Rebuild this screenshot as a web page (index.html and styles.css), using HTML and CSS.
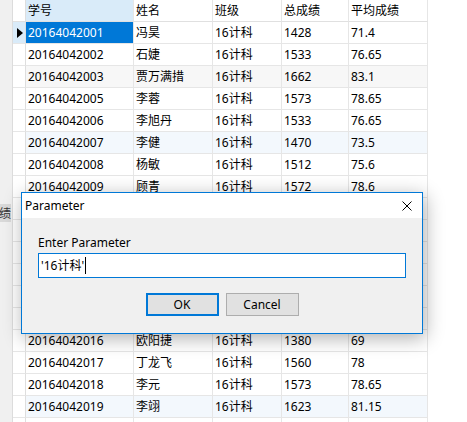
FILE: index.html
```html
<!DOCTYPE html>
<html lang="zh">
<head>
<meta charset="utf-8">
<link rel="stylesheet" href="styles.css">
</head>
<body>
<div class="app">
  <div class="strip">
    <div class="tabfrag"><span>成绩</span></div>
  </div>
  <div class="grid">
    <div class="row head">
      <div class="rh"></div><div class="sel-col">学号</div><div>姓名</div><div>班级</div><div>总成绩</div><div>平均成绩</div>
    </div>
    <div class="row cur">
      <div class="rh"><span class="arrow"></span></div><div class="sel-cell">20164042001</div><div>冯昊</div><div>16计科</div><div>1428</div><div>71.4</div>
    </div>
    <div class="row">
      <div class="rh"></div><div>20164042002</div><div>石婕</div><div>16计科</div><div>1533</div><div>76.65</div>
    </div>
    <div class="row gray">
      <div class="rh"></div><div>20164042003</div><div>贾万满措</div><div>16计科</div><div>1662</div><div>83.1</div>
    </div>
    <div class="row">
      <div class="rh"></div><div>20164042005</div><div>李蓉</div><div>16计科</div><div>1573</div><div>78.65</div>
    </div>
    <div class="row">
      <div class="rh"></div><div>20164042006</div><div>李旭丹</div><div>16计科</div><div>1533</div><div>76.65</div>
    </div>
    <div class="row blue">
      <div class="rh"></div><div>20164042007</div><div>李健</div><div>16计科</div><div>1470</div><div>73.5</div>
    </div>
    <div class="row">
      <div class="rh"></div><div>20164042008</div><div>杨敏</div><div>16计科</div><div>1512</div><div>75.6</div>
    </div>
    <div class="row">
      <div class="rh"></div><div>20164042009</div><div>顾青</div><div>16计科</div><div>1572</div><div>78.6</div>
    </div>
    <div class="row"><div class="rh"></div><div></div><div></div><div></div><div></div><div></div></div>
    <div class="row"><div class="rh"></div><div></div><div></div><div></div><div></div><div></div></div>
    <div class="row"><div class="rh"></div><div></div><div></div><div></div><div></div><div></div></div>
    <div class="row"><div class="rh"></div><div></div><div></div><div></div><div></div><div></div></div>
    <div class="row"><div class="rh"></div><div></div><div></div><div></div><div></div><div></div></div>
    <div class="row"><div class="rh"></div><div></div><div></div><div></div><div></div><div></div></div>
    <div class="row">
      <div class="rh"></div><div>20164042016</div><div>欧阳捷</div><div>16计科</div><div>1380</div><div>69</div>
    </div>
    <div class="row">
      <div class="rh"></div><div>20164042017</div><div>丁龙飞</div><div>16计科</div><div>1560</div><div>78</div>
    </div>
    <div class="row">
      <div class="rh"></div><div>20164042018</div><div>李元</div><div>16计科</div><div>1573</div><div>78.65</div>
    </div>
    <div class="row blue">
      <div class="rh"></div><div>20164042019</div><div>李翊</div><div>16计科</div><div>1623</div><div>81.15</div>
    </div>
    <div class="row"><div class="rh"></div><div></div><div></div><div></div><div></div><div></div></div>
  </div>
  <div class="dialog">
    <div class="titlebar">
      <span class="title">Parameter</span>
      <svg class="close" width="10" height="10" viewBox="0 0 10 10"><path d="M0.5 0.5 L9.5 9.5 M9.5 0.5 L0.5 9.5" stroke="#000" stroke-width="1" fill="none"/></svg>
    </div>
    <div class="body">
      <div class="label">Enter Parameter</div>
      <div class="input">'16计科'<span class="caret"></span></div>
      <div class="buttons">
        <div class="btn default">OK</div>
        <div class="btn">Cancel</div>
      </div>
    </div>
  </div>
</div>
</body>
</html>
```

FILE: styles.css
```css
html, body {
  margin: 0;
  padding: 0;
  background: #ffffff;
  overflow: hidden;
}
body {
  font-family: "Noto Sans", "Noto Sans CJK SC", sans-serif;
  font-size: 12px;
  color: #000;
}
.app {
  position: relative;
  display: flex;
  width: 467px;
  height: 422px;
  overflow: hidden;
}
.strip {
  width: 13px;
  box-sizing: border-box;
  background: #f0f0f0;
  border-right: 1px solid #dcdcdc;
  display: flex;
  flex-direction: column;
}
.tabfrag {
  margin-top: 204px;
  width: 11px;
  height: 18px;
  background: #d9d9d9;
  overflow: hidden;
  display: flex;
  justify-content: flex-end;
  line-height: 18px;
  color: #333;
  font-family: "Noto Sans CJK SC", sans-serif;
}
.tabfrag span {
  white-space: nowrap;
  flex: none;
}
.grid {
  display: grid;
  grid-template-columns: 13px 108px 79px 69px 67px 79px;
  grid-auto-rows: 22px;
  align-content: start;
}
.row {
  display: contents;
}
.row > div {
  box-sizing: border-box;
  border-right: 1px solid #e6e6e6;
  border-bottom: 1px solid #e6e6e6;
  padding-left: 2px;
  line-height: 21px;
  white-space: nowrap;
  overflow: hidden;
  background: #ffffff;
}
.row > .rh {
  padding: 0;
  border-right-color: #dedede;
}
.row.head > div {
  background: #ffffff;
  border-bottom-color: #e0e0e0;
}
.row.head > .sel-col {
  background: #d9ebf9;
}
.row.cur > .rh {
  background: #d9ebf9;
  display: flex;
  align-items: center;
  justify-content: center;
}
.arrow {
  width: 0;
  height: 0;
  border-top: 5px solid transparent;
  border-bottom: 5px solid transparent;
  border-left: 6px solid #000;
  margin-left: 2px;
}
.row > .sel-cell {
  background: #0078d7;
  color: #ffffff;
}
.row.gray > div:not(.rh) {
  background: #f7f7f7;
}
.row.blue > div:not(.rh) {
  background: #f3f8fd;
}
.dialog {
  position: absolute;
  left: 21px;
  top: 192px;
  width: 402px;
  height: 142px;
  box-sizing: border-box;
  border: 1px solid #0078d7;
  background: #f0f0f0;
  box-shadow: 2px 4px 18px rgba(0, 0, 0, 0.32);
  display: flex;
  flex-direction: column;
}
.titlebar {
  height: 25px;
  background: #ffffff;
  display: flex;
  align-items: center;
  justify-content: space-between;
  padding: 0 10px 0 3px;
  flex: none;
}
.title {
  line-height: 16px;
  margin-top: 1px;
}
.close {
  display: block;
  margin-top: 1px;
}
.body {
  flex: 1;
  background: #f0f0f0;
  padding: 17px 16px 0 16px;
  display: flex;
  flex-direction: column;
}
.label {
  line-height: 16px;
  height: 16px;
}
.input {
  margin-top: 2px;
  height: 25px;
  box-sizing: border-box;
  border: 1px solid #0078d7;
  background: #ffffff;
  padding-left: 2px;
  line-height: 23px;
  display: flex;
  align-items: center;
}
.caret {
  display: inline-block;
  width: 1px;
  height: 17px;
  background: #000;
  margin-left: 1px;
}
.buttons {
  margin-top: 15px;
  display: flex;
  justify-content: center;
  gap: 7px;
}
.btn {
  width: 73px;
  height: 23px;
  box-sizing: border-box;
  border: 1px solid #adadad;
  background: #e1e1e1;
  display: flex;
  align-items: center;
  justify-content: center;
  line-height: 16px;
}
.btn.default {
  border: 2px solid #0078d7;
}
```
